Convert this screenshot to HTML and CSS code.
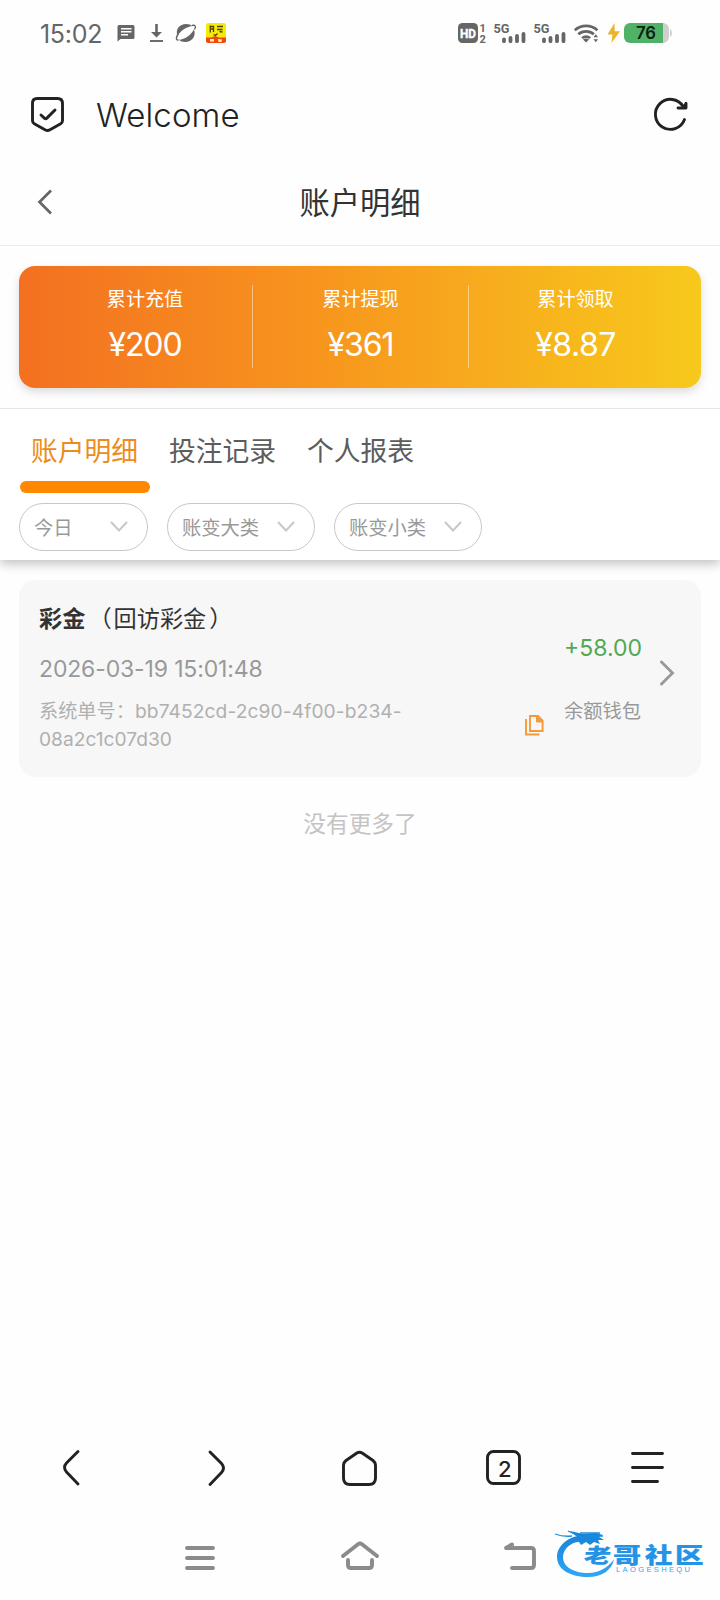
FILE: index.html
```html
<!DOCTYPE html>
<html lang="zh-CN">
<head>
<meta charset="utf-8">
<meta name="viewport" content="width=device-width">
<title>账户明细</title>
<link rel="stylesheet" href="styles.css">
</head>
<body>
<div class="screen">
  <div class="status">
    <span class="clock">15:02</span>
    <svg class="status-left" width="112" height="24" viewBox="116 21 112 24">
      <path fill="#666" fill-rule="evenodd" d="M119 25H133a1.500 1.500 0 0 1 1.500 1.500V37.500a1.500 1.500 0 0 1-1.500 1.500H120.500L117.500 41.500V26.500a1.500 1.500 0 0 1 1.500-1.500zM121 28v1.500h10.500V28zM121 31v1.500h10.500V31zM121 34v1.500h7V34z"/>
      <path d="M156.500 24V34" stroke="#666" stroke-width="2.600"/><path d="M151 32h11l-5.500 5.500z" fill="#666"/><path d="M150 41h13" stroke="#666" stroke-width="1.900"/>
      <path fill="#666" d="M177.500 35.500C175 29 180 24 186 24c3 0 5 .8 6.200 2C186 27 182 30 177.500 35.500z M194 29.500C196.500 36 192 42 185 42c-2.500 0-4.500-.8-6-2.200C185 39 190 36 194 29.500z"/>
      <path fill="none" stroke="#666" stroke-width="1.400" d="M178.500 33.500c-3 4-2.600 6.800 0 6.500M192 25.500c3-.8 4.600.5 2.500 4"/>
      <rect x="206" y="23" width="20" height="20" rx="2.500" fill="#f8e909"/>
      <path d="M206 37.500h5l4-1.500 4 1.500h7v3a2.500 2.500 0 0 1-2.500 2.500h-15a2.500 2.500 0 0 1-2.500-2.500z" fill="#ee4a13"/>
      <path d="M209.500 26.500h4.500M210.300 25.500v7M213.500 26v6M210 29h3M217 26.500h6M217 29.500h5.500M219.500 31.500l3 .5M213.500 34.500l2 1 2-2" stroke="#4e440a" stroke-width="1.300" fill="none"/>
      <path d="M210 39h4v2.500h-4zM218 39l4 .5-.5 2.500h-3z" fill="#fff0b0"/>
    </svg>
    <svg class="status-right" width="218" height="26" viewBox="456 20 218 26">
      <g fill="#666" font-family="Roboto, sans-serif" font-weight="700">
        <rect x="458" y="23" width="20" height="20" rx="4.500"/>
        <text x="460" y="37.500" font-size="12.500" fill="#fff" stroke="#fff" stroke-width=".4" textLength="16" lengthAdjust="spacingAndGlyphs">HD</text>
        <text x="479.500" y="31.500" font-size="11">1</text>
        <text x="479.500" y="42.500" font-size="11">2</text>
        <text x="493.500" y="32.500" font-size="12.500" textLength="16" lengthAdjust="spacingAndGlyphs">5G</text>
        <text x="533.500" y="32.500" font-size="12.500" textLength="16" lengthAdjust="spacingAndGlyphs">5G</text>
      </g>
      <g stroke="#666" stroke-width="3.800" stroke-linecap="round">
        <path d="M504 39.500v1.700M510.500 37.800v3.400M517 35.800v5.400M523.500 33.800v7.400"/>
        <path d="M544 39.500v1.700M550.500 37.800v3.400M557 35.800v5.400M563.500 33.800v7.400"/>
      </g>
      <g fill="none" stroke="#666" stroke-width="2.700">
        <path d="M574.800 30.200a17 17 0 0 1 22.600 0M578.300 34.200a12 12 0 0 1 15.600 0M582 38a7 7 0 0 1 8.200 0"/>
      </g>
      <path fill="#666" d="M583 39.500q3-2 6 0l-3 3zM593.500 37.300l2.300-3 2.300 3zM593.500 39.200l2.300 3 2.300-3z"/>
      <path fill="#edb42b" d="M614.500 23l-7 11.500h5L611.500 43l8.500-11.800h-5.300z"/>
      <path fill="#cfcfcf" d="M660 23h3a6 6 0 0 1 6 6v8a6 6 0 0 1-6 6h-3zM670 29q2 1 2 4t-2 4z"/>
      <path fill="#50b267" d="M663 23v20h-33a6 6 0 0 1-6-6v-8a6 6 0 0 1 6-6z"/>
      <text x="636" y="39" font-family="Inter, sans-serif" font-size="17" font-weight="600" fill="#0b210f" textLength="20" lengthAdjust="spacingAndGlyphs">76</text>
    </svg>
  </div>

  <header class="browser-bar">
    <svg width="36" height="38" viewBox="30 95 36 38" fill="none" stroke="#222" stroke-width="2.900" stroke-linejoin="round" stroke-linecap="round">
      <path d="M37 98.500h20.500q5 0 5 5v17.200q0 2-1.800 3L50 129.800q-2.500 1.400-5 0L34.300 123.700q-1.800-1-1.800-3v-17.200q0-5 4.500-5z"/>
      <path d="M41 115l3.600 3.400q1 .8 2 0L55 110"/>
    </svg>
    <span class="site">Welcome</span>
    <svg class="reload" width="38" height="38" viewBox="651 95 38 38" fill="none" stroke="#222" stroke-width="2.900" stroke-linecap="round" stroke-linejoin="round">
      <path d="M684.500 119.500A15 15 0 1 1 683.200 106.500"/>
      <path d="M686 103.500v4.500h-8M686 103.500l-3 4.500"/>
    </svg>
  </header>

  <div class="page-head">
    <svg width="15" height="26" viewBox="0 0 15 26" fill="none" stroke="#666" stroke-width="2.700"><path d="M14 1.500L2.500 13L14 24.500"/></svg>
    <h1>账户明细</h1>
  </div>

  <section class="summary-wrap">
    <div class="summary">
      <div class="stat"><span>累计充值</span><b>¥200</b></div>
      <div class="stat"><span>累计提现</span><b>¥361</b></div>
      <div class="stat"><span>累计领取</span><b class="wide">¥8.87</b></div>
    </div>
  </section>

  <section class="filters">
    <nav class="tabs">
      <span class="tab active">账户明细</span>
      <span class="tab">投注记录</span>
      <span class="tab">个人报表</span>
    </nav>
    <div class="pills">
      <div class="pill short"><span>今日</span><svg width="18" height="11" viewBox="0 0 18 11"><path d="M1 1l8 8.500L17 1"/></svg></div>
      <div class="pill"><span>账变大类</span><svg width="18" height="11" viewBox="0 0 18 11"><path d="M1 1l8 8.500L17 1"/></svg></div>
      <div class="pill"><span>账变小类</span><svg width="18" height="11" viewBox="0 0 18 11"><path d="M1 1l8 8.500L17 1"/></svg></div>
    </div>
  </section>

  <main class="list">
    <article class="record">
      <div class="info">
        <div class="kind"><strong>彩金</strong><div class="note"><span class="open">（</span><span>回访彩金</span><span class="close">）</span></div></div>
        <div class="time">2026-03-19 15:01:48</div>
        <div class="order">
          <div class="order-no">系统单号：<span class="id">bb7452cd-2c90-4f00-b234-</span><br><span>08a2c1c07d30</span></div>
          <svg width="19" height="21" viewBox="0 0 19 21" fill="none" stroke="#f59a36" stroke-width="1.900"><path d="M1 4v15.500h13.500"/><path d="M5 1h8l4.600 4.600V16H5z"/><path d="M11.500 1v6h6z" fill="#f59a36" stroke-width="1"/></svg>
        </div>
      </div>
      <div class="money">
        <span class="amount">+58.00</span>
        <span class="wallet">余额钱包</span>
      </div>
      <svg class="more" width="16" height="26" viewBox="0 0 16 26" fill="none" stroke="#999" stroke-width="2.900" stroke-linecap="round"><path d="M2.500 2l11 11L2.500 24"/></svg>
    </article>
    <p class="end">没有更多了</p>
  </main>

  <nav class="toolbar">
    <svg width="40" height="40" viewBox="52 1448 40 40"><path d="M78 1451.500L66.500 1463q-4 4.500 0 9L78 1484"/></svg>
    <svg width="40" height="40" viewBox="196 1448 40 40"><path d="M210 1452L221.500 1463.500q4 4.500 0 9L210 1484.500"/></svg>
    <svg width="40" height="40" viewBox="340 1448 40 40"><path d="M346 1460.500L356.500 1453.200q3-2 6 0L373 1460.500q2.500 2 2.500 4.500v13q0 6.500-6.500 6.500h-19q-6.500 0-6.500-6.500v-13q0-2.500 2.500-4.500z"/></svg>
    <svg width="40" height="40" viewBox="484 1448 40 40"><rect x="487.500" y="1451.500" width="32" height="32" rx="6"/><text x="498" y="1476.500">2</text></svg>
    <svg width="40" height="40" viewBox="628 1448 40 40"><path d="M632.500 1453.500h30M632.500 1467.500h30M632.500 1481.500h25"/></svg>
  </nav>

  <nav class="system-nav">
    <svg width="40" height="36" viewBox="180 1539 40 36"><path d="M187 1548h26M187 1558h26M187 1568h26"/></svg>
    <svg width="40" height="36" viewBox="340 1539 40 36"><path d="M343 1556l15-11.700q2-1.500 4 0L377 1556M348 1560v5q0 3 3 3h18q3 0 3-3v-5"/></svg>
    <svg width="40" height="36" viewBox="500 1539 40 36"><path d="M512 1568h19q3 0 3-3v-14q0-3-3-3h-25l6-3.500"/></svg>
  </nav>

  <svg class="watermark" width="156" height="56" viewBox="552 1525 156 56">
    <defs><linearGradient id="blue" x1="0" y1="0" x2="0" y2="1"><stop offset="0" stop-color="#1480d8"/><stop offset="1" stop-color="#2fa8f3"/></linearGradient></defs>
    <path fill="url(#blue)" d="M584 1535C568 1536 557 1546 557 1557C557 1570 571 1577 588 1577C602 1577 612 1570 614 1559C609 1567 599 1573 588 1573C574 1573 563 1567 563 1557C563 1549 571 1542 579 1542L581 1545L586 1542L590 1545L594 1542L600 1544L598 1540L604 1540L599 1537L603 1535L596 1533L583 1534L570 1531L576 1536z"/>
    <path d="M555 1534q8 3 17 2M568 1531l15 7M580 1533l20 0M585 1536l18 0" fill="none" stroke="#1c8ddd" stroke-width="1.300"/>
    <g font-family="Noto Sans CJK SC, sans-serif" font-weight="900" font-size="27" fill="#2493e6" stroke="#2493e6" stroke-width=".3">
      <text transform="translate(583 1563) skewX(-8) scale(1 .76)" stroke="#fefefe" stroke-width="2.500" paint-order="stroke">老</text>
      <text transform="translate(613 1563) scale(1.040 .78)">哥</text>
      <text transform="translate(645 1563) scale(1.020 .78)">社</text>
      <text transform="translate(675 1563) scale(1.060 .78)">区</text>
    </g>
    <text x="616" y="1572" font-family="Liberation Sans, sans-serif" font-size="7.500" fill="#35a6ef" textLength="74">LAOGESHEQU</text>
  </svg>
</div>
</body>
</html>
```
FILE: styles.css
```css
* { box-sizing: border-box; }
body { margin: 0; background: #fefefe; font-family: Inter, "Noto Sans CJK SC", sans-serif; color: #333; }
svg { display: block; flex: none; }
.screen { position: relative; width: 720px; height: 1600px; display: flex; flex-direction: column; overflow: hidden; }

.status { height: 66px; padding: 0 46px 0 40px; display: flex; align-items: center; }
.clock { width: 76px; padding-top: 1px; font-size: 25px; color: #666; letter-spacing: -.3px; white-space: nowrap; }
.status-right { margin-left: auto; }

.browser-bar { height: 96px; padding: 0 31px 0 30px; display: flex; align-items: center; }
.site { margin-left: 30px; font-size: 33px; font-weight: 350; letter-spacing: .1px; color: #222; padding-top: 2px; }
.reload { margin-left: auto; }

.page-head { height: 84px; padding: 0 37px 4px; display: grid; grid-template-columns: 15px 1fr 15px; align-items: center; border-bottom: 1px solid #ebebeb; }
.page-head h1 { margin: 0; padding-bottom: 1px; text-align: center; font-size: 30.300px; font-weight: 400; }

.summary-wrap { height: 163px; padding: 20px 19px; border-bottom: 1px solid #e6e6e6; }
.summary { height: 122px; padding: 19px 19px 20px; display: grid; grid-template-columns: 215px 216px 213px; border-radius: 16px; background: linear-gradient(90deg, #f37021, #f7921e 40%, #f7c91c); box-shadow: 0 4px 10px rgba(0,0,0,.14); color: #fff; }
.stat { display: flex; flex-direction: column; align-items: center; border-right: 1px solid rgba(255,255,255,.45); }
.stat:last-child { border-right: 0; }
.stat span { font-size: 19.100px; line-height: 28px; }
.stat b { margin-top: 12px; font-size: 32px; line-height: 40px; font-weight: 400; letter-spacing: -1.100px; }
.stat .wide { letter-spacing: -.5px; }

.filters { height: 151px; background: #fff; box-shadow: 0 4px 10px rgba(0,0,0,.24); clip-path: inset(0 0 -20px 0); }
.tabs { height: 84px; padding-left: 20px; display: flex; gap: 8px; }
.tab { position: relative; width: 130px; padding: 2px 1px 0 0; text-align: center; font-size: 26.800px; line-height: 80px; color: #5c5c5c; white-space: nowrap; }
.active { color: #ec8c1c; }
.active::after { content: ""; position: absolute; left: 0; right: 0; top: 72px; height: 12px; border-radius: 6px; background: #ff8800; }
.pills { padding: 10px 19px 0; display: flex; gap: 19px; }
.pill { width: 148px; height: 48px; padding: 0 19px 1px 14px; border: 1px solid #c8c8c8; border-radius: 24px; display: flex; align-items: center; justify-content: space-between; font-size: 19.300px; color: #999; }
.pill.short { width: 129px; }
.pill path { fill: none; stroke: #c8c8c8; stroke-width: 2; }

.list { flex: 1; padding: 20px 19px 0; }
.record { height: 197px; padding: 0 26px 0 20px; border-radius: 17px; background: #f7f7f7; display: flex; }
.info { width: 506px; padding-top: 22px; }
.kind { font-size: 23.200px; line-height: 34px; color: #333; display: flex; gap: 5px; }
.note { display: flex; }
.note .open { margin: 0 2px 0 -2px; }
.note .close { margin-left: 3px; }
.time { margin-top: 16px; font-size: 23px; line-height: 34px; letter-spacing: -.15px; color: #999; white-space: nowrap; }
.order { display: flex; justify-content: space-between; margin-top: 11px; color: #b0b0b0; }
.order-no { font-size: 19.200px; line-height: 28px; white-space: nowrap; }
.order .id { letter-spacing: .1px; }
.order svg { margin: 18px 1px 0 0; }
.money { margin-left: 19px; width: 95px; padding-top: 53px; display: flex; flex-direction: column; }
.amount { font-size: 23px; line-height: 30px; color: #51a755; }
.wallet { margin-top: 34px; font-size: 19.300px; line-height: 28px; color: #999; }
.more { margin-top: 80px; }
.end { margin: 31px 0 0; text-align: center; font-size: 22.700px; line-height: 32px; color: #c4c4c4; }

.toolbar { height: 88px; display: grid; grid-template-columns: repeat(5, 144px); justify-items: center; align-items: center; }
.toolbar svg { fill: none; stroke: #222; stroke-width: 2.900; stroke-linecap: round; }
.toolbar text { font: 500 22px Inter, sans-serif; fill: #222; stroke: none; }
.system-nav { height: 88px; padding: 2px 120px 0; display: grid; grid-template-columns: repeat(3, 160px); justify-items: center; align-items: center; }
.system-nav svg { fill: none; stroke: #8b8b8b; stroke-width: 3.900; stroke-linecap: round; stroke-linejoin: round; }
.watermark { position: absolute; right: 12px; bottom: 19px; }
```
